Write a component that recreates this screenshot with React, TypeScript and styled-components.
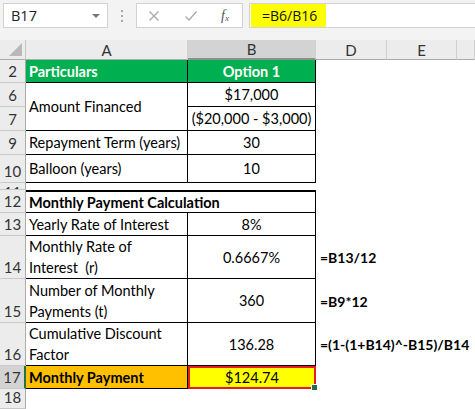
import React from "react";
import styled, { createGlobalStyle } from "styled-components";

const GlobalStyle = createGlobalStyle`
  html, body {
    margin: 0;
    padding: 0;
    background: #ffffff;
  }
  body {
    font-family: Lato, "Open Sans", Arial, sans-serif;
  }
`;

const Page = styled.div`
  width: 475px;
  height: 409px;
  overflow: hidden;
  background: #ffffff;
`;

/* ---------- formula bar ---------- */

const FormulaBar = styled.div`
  height: 40px;
  box-sizing: border-box;
  padding: 3px 0 0 3px;
  background: #f3f3f3;
  display: flex;
  align-items: flex-start;
  font-family: "Open Sans", "Noto Sans", Arial, sans-serif;
`;

const Box = styled.div<{ $w?: number }>`
  height: 25px;
  box-sizing: border-box;
  background: #ffffff;
  border: 1px solid #d2d2d2;
  display: flex;
  align-items: center;
  width: ${({ $w }) => ($w ? `${$w}px` : "auto")};
  flex: ${({ $w }) => ($w ? "none" : "1")};
`;

const NameBox = styled(Box)`
  justify-content: space-between;
  padding: 0 7px 0 7px;
  font-size: 14.5px;
  color: #222;
`;

const Caret = styled.span`
  width: 0;
  height: 0;
  border-left: 4px solid transparent;
  border-right: 4px solid transparent;
  border-top: 4px solid #777;
`;

const Grip = styled.div`
  width: 28px;
  height: 25px;
  display: flex;
  flex-direction: column;
  align-items: center;
  justify-content: center;
  gap: 3px;
  span {
    width: 2px;
    height: 2px;
    background: #a8a8a8;
  }
`;

const FxBox = styled(Box)`
  padding-left: 11px;
  margin-right: 6px;
  gap: 0;
`;

const IconSlot = styled.span<{ $w: number }>`
  width: ${({ $w }) => $w}px;
  display: flex;
  justify-content: flex-start;
  align-items: center;
`;

const FxIcon = styled.span`
  font-family: "Liberation Serif", serif;
  font-style: italic;
  font-size: 14px;
  color: #555;
  sub {
    font-size: 9px;
    vertical-align: -1px;
  }
`;

const FormulaInput = styled(Box)`
  border-right: none;
  padding-left: 1px;
  align-items: stretch;
`;

const Highlight = styled.div`
  background: #ffff00;
  width: 75px;
  padding-left: 11px;
  box-sizing: border-box;
  display: flex;
  align-items: center;
  font-size: 14px;
  color: #111;
`;

/* ---------- sheet ---------- */

const Sheet = styled.div`
  display: grid;
  grid-template-columns: 26px 162px 128px 71px 70px 1fr;
  grid-template-rows: 20px 23px 24px 24px 24px 28px 7px 23px 23px 43px 44px 43px 23px 20px;
  font-size: 14.5px;
  color: #000;
`;

const Corner = styled.div`
  grid-column: 1;
  grid-row: 1;
  background: #ececec;
  border-right: 1px solid #c8c8c8;
  border-bottom: 1px solid #ababab;
  position: relative;
  &::after {
    content: "";
    position: absolute;
    right: 3px;
    bottom: 3px;
    border-left: 13px solid transparent;
    border-bottom: 13px solid #b8b8b8;
  }
`;

const ColHead = styled.div<{ $c: number; $sel?: boolean }>`
  grid-column: ${({ $c }) => $c};
  grid-row: 1;
  box-sizing: border-box;
  background: ${({ $sel }) => ($sel ? "#d3d3d3" : "#ececec")};
  border-right: 1px solid #d0d0d0;
  border-bottom: ${({ $sel }) => ($sel ? "2px solid #8e8e8e" : "1px solid #ababab")};
  display: flex;
  align-items: center;
  justify-content: center;
  font-size: 15px;
  color: #333;
`;

const RowHead = styled.div<{ $r: number; $sel?: boolean }>`
  grid-column: 1;
  grid-row: ${({ $r }) => $r};
  box-sizing: border-box;
  background: ${({ $sel }) => ($sel ? "#d3d3d3" : "#ececec")};
  border-right: ${({ $sel }) => ($sel ? "2px solid #217346" : "1px solid #ababab")};
  border-bottom: 1px solid #c8c8c8;
  display: flex;
  justify-content: center;
  align-items: flex-end;
  padding-bottom: 2px;
  overflow: hidden;
  font-size: 15px;
  line-height: 18px;
  color: #333;
`;

/* row 11 is almost hidden: only the top of its number shows */
const ClippedNumber = styled.span`
  display: block;
  height: 5px;
  overflow: hidden;
  font-size: 15px;
  line-height: 16px;
  padding-top: 0;
  margin-bottom: -2px;
`;

type CellProps = {
  $c: string;
  $r: string;
  $bg?: string;
  $bold?: boolean;
  $color?: string;
  $center?: boolean;
  $bottom?: boolean;
  $bt?: boolean;
  $br?: boolean;
  $bb?: boolean;
  $btw?: number;
};

const Cell = styled.div<CellProps>`
  grid-column: ${({ $c }) => $c};
  grid-row: ${({ $r }) => $r};
  box-sizing: border-box;
  background: ${({ $bg }) => $bg || "transparent"};
  color: ${({ $color }) => $color || "#000"};
  font-weight: ${({ $bold }) => ($bold ? 700 : 400)};
  border-top: ${({ $bt, $btw }) => ($bt ? `${$btw || 1}px solid #000` : "none")};
  border-right: ${({ $br }) => ($br ? "1px solid #000" : "none")};
  border-bottom: ${({ $bb }) => ($bb ? "1px solid #000" : "none")};
  display: flex;
  flex-direction: column;
  justify-content: ${({ $bottom }) => ($bottom ? "flex-end" : "center")};
  align-items: ${({ $center }) => ($center ? "center" : "flex-start")};
  padding: 0 3px;
  line-height: 21px;
  white-space: pre;
  overflow: visible;
`;

const Formula = styled(Cell)`
  font-weight: 700;
  font-size: 14px;
  padding-left: 4px;
  z-index: 1;
`;

const ActiveCell = styled(Cell)`
  border: 2px solid #e51c23;
  position: relative;
  &::after {
    content: "";
    position: absolute;
    right: -4px;
    bottom: -4px;
    width: 5px;
    height: 5px;
    background: #217346;
    border: 1px solid #fff;
  }
`;

const GREEN = "#00b050";
const ORANGE = "#ffc000";

const rowNumbers: { n: string; r: number; sel?: boolean }[] = [
  { n: "2", r: 2 },
  { n: "6", r: 3 },
  { n: "7", r: 4 },
  { n: "9", r: 5 },
  { n: "10", r: 6 },
  { n: "12", r: 8 },
  { n: "13", r: 9 },
  { n: "14", r: 10 },
  { n: "15", r: 11 },
  { n: "16", r: 12 },
  { n: "17", r: 13, sel: true },
  { n: "18", r: 14 },
];

export default function App() {
  return (
    <Page>
      <GlobalStyle />
      <FormulaBar>
        <NameBox $w={105}>
          <span>B17</span>
          <Caret />
        </NameBox>
        <Grip>
          <span />
          <span />
          <span />
        </Grip>
        <FxBox $w={107}>
          <IconSlot $w={36}>
            <svg width="12" height="12" viewBox="0 0 12 12">
              <path d="M1.5 1.5 L10.5 10.5 M10.5 1.5 L1.5 10.5" stroke="#a9a9a9" strokeWidth="1.3" fill="none" />
            </svg>
          </IconSlot>
          <IconSlot $w={37}>
            <svg width="14" height="12" viewBox="0 0 14 12">
              <path d="M1.5 6.5 L5 10 L12.5 1.5" stroke="#a9a9a9" strokeWidth="1.3" fill="none" />
            </svg>
          </IconSlot>
          <FxIcon>
            f<sub>x</sub>
          </FxIcon>
        </FxBox>
        <FormulaInput>
          <Highlight>=B6/B16</Highlight>
        </FormulaInput>
      </FormulaBar>

      <Sheet>
        <Corner />
        <ColHead $c={2}>A</ColHead>
        <ColHead $c={3} $sel>
          B
        </ColHead>
        <ColHead $c={4}>D</ColHead>
        <ColHead $c={5}>E</ColHead>
        <ColHead $c={6} />

        {rowNumbers.map((row) => (
          <RowHead key={row.n} $r={row.r} $sel={row.sel}>
            {row.n}
          </RowHead>
        ))}
        <RowHead $r={7}>
          <ClippedNumber>11</ClippedNumber>
        </RowHead>

        {/* block 1 */}
        <Cell $c="2" $r="2" $bg={GREEN} $color="#fff" $bold $br $bb>
          Particulars
        </Cell>
        <Cell $c="3" $r="2" $bg={GREEN} $color="#fff" $bold $center $br $bb>
          Option 1
        </Cell>
        <Cell $c="2" $r="3 / span 2" $br $bb>
          Amount Financed
        </Cell>
        <Cell $c="3" $r="3" $center $br $bb>
          $17,000
        </Cell>
        <Cell $c="3" $r="4" $center $br $bb>
          ($20,000 - $3,000)
        </Cell>
        <Cell $c="2" $r="5" $br $bb>
          Repayment Term (years)
        </Cell>
        <Cell $c="3" $r="5" $center $br $bb>
          30
        </Cell>
        <Cell $c="2" $r="6" $br $bb>
          Balloon (years)
        </Cell>
        <Cell $c="3" $r="6" $center $br $bb>
          10
        </Cell>

        {/* block 2 */}
        <Cell $c="2 / span 2" $r="8" $bold $bt $btw={2} $br $bb>
          Monthly Payment Calculation
        </Cell>
        <Cell $c="2" $r="9" $br $bb>
          Yearly Rate of Interest
        </Cell>
        <Cell $c="3" $r="9" $center $br $bb>
          8%
        </Cell>
        <Cell $c="2" $r="10" $bottom $br $bb>
          {"Monthly Rate of\nInterest  (r)"}
        </Cell>
        <Cell $c="3" $r="10" $center $br $bb>
          0.6667%
        </Cell>
        <Formula $c="4 / span 3" $r="10">
          =B13/12
        </Formula>
        <Cell $c="2" $r="11" $bottom $br $bb>
          {"Number of Monthly\nPayments (t)"}
        </Cell>
        <Cell $c="3" $r="11" $center $br $bb>
          360
        </Cell>
        <Formula $c="4 / span 3" $r="11">
          =B9*12
        </Formula>
        <Cell $c="2" $r="12" $bottom $br $bb>
          {"Cumulative Discount\nFactor"}
        </Cell>
        <Cell $c="3" $r="12" $center $br $bb>
          136.28
        </Cell>
        <Formula $c="4 / span 3" $r="12">
          =(1-(1+B14)^-B15)/B14
        </Formula>
        <Cell $c="2" $r="13" $bg={ORANGE} $bold $br $bb>
          Monthly Payment
        </Cell>
        <ActiveCell $c="3" $r="13" $bg="#ffff00" $center>
          $124.74
        </ActiveCell>
      </Sheet>
    </Page>
  );
}
